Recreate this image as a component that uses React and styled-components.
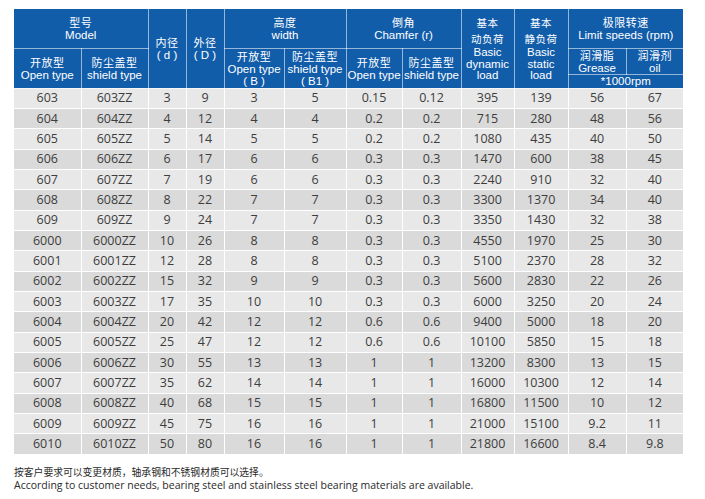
import React from "react";
import styled, { createGlobalStyle } from "styled-components";

const GlobalStyle = createGlobalStyle`
  html, body {
    margin: 0;
    padding: 0;
    background: #fff;
  }
`;

const Page = styled.div`
  padding: 9px 0 0 14px;
  width: 705px;
  box-sizing: border-box;
`;

const Table = styled.table`
  width: 669px;
  table-layout: fixed;
  border-collapse: collapse;
  border-style: hidden;
`;

const HeadCell = styled.th`
  background: #125daa;
  color: #fff;
  font-family: "Liberation Sans", "Noto Sans CJK SC", sans-serif;
  font-size: 11.5px;
  font-weight: normal;
  line-height: ${(p) => p.$lh || 12}px;
  text-align: center;
  vertical-align: middle;
  padding: 0;
  white-space: nowrap;
  border: 1px solid rgba(255, 255, 255, 0.55);
`;

const Zh = styled.span`
  font-family: "Noto Sans CJK SC", sans-serif;
  font-size: 11px;
  letter-spacing: 0.5px;
`;

// two stacked chinese lines for the tall load columns
const ZhBlock = styled.div`
  font-family: "Noto Sans CJK SC", sans-serif;
  font-size: 10.5px;
  letter-spacing: 0.5px;
  line-height: 15.5px;
  margin-bottom: 1px;
`;

const HeadRow = styled.tr`
  height: ${(p) => p.$h}px;
`;

const Row = styled.tr`
  height: 20.35px;
  background: ${(p) => (p.$alt ? "#dadada" : "#e8e8e8")};
`;

const Cell = styled.td`
  font-family: "Open Sans", sans-serif;
  font-size: 12.5px;
  color: #3d3d3d;
  text-align: center;
  vertical-align: middle;
  padding: 0;
  line-height: 14px;
  border: 1px solid #fff;
`;

const Note = styled.div`
  margin-top: 12px;
  color: #2a2a2a;
`;

const NoteZh = styled.div`
  font-family: "Noto Sans CJK SC", sans-serif;
  font-size: 9.8px;
  line-height: 12px;
`;

const NoteEn = styled.div`
  font-family: "Open Sans", sans-serif;
  font-size: 10.5px;
  line-height: 14px;
`;

const widths = [67, 67, 38, 38, 60, 62, 56, 59, 53, 54, 58, 57];

const rows = [
  ["603", "603ZZ", "3", "9", "3", "5", "0.15", "0.12", "395", "139", "56", "67"],
  ["604", "604ZZ", "4", "12", "4", "4", "0.2", "0.2", "715", "280", "48", "56"],
  ["605", "605ZZ", "5", "14", "5", "5", "0.2", "0.2", "1080", "435", "40", "50"],
  ["606", "606ZZ", "6", "17", "6", "6", "0.3", "0.3", "1470", "600", "38", "45"],
  ["607", "607ZZ", "7", "19", "6", "6", "0.3", "0.3", "2240", "910", "32", "40"],
  ["608", "608ZZ", "8", "22", "7", "7", "0.3", "0.3", "3300", "1370", "34", "40"],
  ["609", "609ZZ", "9", "24", "7", "7", "0.3", "0.3", "3350", "1430", "32", "38"],
  ["6000", "6000ZZ", "10", "26", "8", "8", "0.3", "0.3", "4550", "1970", "25", "30"],
  ["6001", "6001ZZ", "12", "28", "8", "8", "0.3", "0.3", "5100", "2370", "28", "32"],
  ["6002", "6002ZZ", "15", "32", "9", "9", "0.3", "0.3", "5600", "2830", "22", "26"],
  ["6003", "6003ZZ", "17", "35", "10", "10", "0.3", "0.3", "6000", "3250", "20", "24"],
  ["6004", "6004ZZ", "20", "42", "12", "12", "0.6", "0.6", "9400", "5000", "18", "20"],
  ["6005", "6005ZZ", "25", "47", "12", "12", "0.6", "0.6", "10100", "5850", "15", "18"],
  ["6006", "6006ZZ", "30", "55", "13", "13", "1", "1", "13200", "8300", "13", "15"],
  ["6007", "6007ZZ", "35", "62", "14", "14", "1", "1", "16000", "10300", "12", "14"],
  ["6008", "6008ZZ", "40", "68", "15", "15", "1", "1", "16800", "11500", "10", "12"],
  ["6009", "6009ZZ", "45", "75", "16", "16", "1", "1", "21000", "15100", "9.2", "11"],
  ["6010", "6010ZZ", "50", "80", "16", "16", "1", "1", "21800", "16600", "8.4", "9.8"],
];

const App = () => {
  return (
    <Page>
      <GlobalStyle />
      <Table>
        <colgroup>
          {widths.map((w, i) => (
            <col key={i} style={{ width: w }} />
          ))}
        </colgroup>
        <thead>
          <HeadRow $h={39}>
            <HeadCell colSpan={2}>
              <Zh>型号</Zh>
              <br />
              Model
            </HeadCell>
            <HeadCell rowSpan={3}>
              <Zh>内径</Zh>
              <br />( d )
            </HeadCell>
            <HeadCell rowSpan={3}>
              <Zh>外径</Zh>
              <br />( D )
            </HeadCell>
            <HeadCell colSpan={2}>
              <Zh>高度</Zh>
              <br />
              width
            </HeadCell>
            <HeadCell colSpan={2}>
              <Zh>倒角</Zh>
              <br />
              Chamfer (r)
            </HeadCell>
            <HeadCell rowSpan={3} $lh={11.5}>
              <ZhBlock>
                基本
                <br />
                动负荷
              </ZhBlock>
              Basic
              <br />
              dynamic
              <br />
              load
            </HeadCell>
            <HeadCell rowSpan={3} $lh={11.5}>
              <ZhBlock>
                基本
                <br />
                静负荷
              </ZhBlock>
              Basic
              <br />
              static
              <br />
              load
            </HeadCell>
            <HeadCell colSpan={2}>
              <Zh>极限转速</Zh>
              <br />
              Limit speeds (rpm)
            </HeadCell>
          </HeadRow>
          <HeadRow $h={25}>
            <HeadCell rowSpan={2}>
              <Zh>开放型</Zh>
              <br />
              Open type
            </HeadCell>
            <HeadCell rowSpan={2}>
              <Zh>防尘盖型</Zh>
              <br />
              shield type
            </HeadCell>
            <HeadCell rowSpan={2}>
              <Zh>开放型</Zh>
              <br />
              Open type
              <br />( B )
            </HeadCell>
            <HeadCell rowSpan={2}>
              <Zh>防尘盖型</Zh>
              <br />
              shield type
              <br />( B1 )
            </HeadCell>
            <HeadCell rowSpan={2}>
              <Zh>开放型</Zh>
              <br />
              Open type
            </HeadCell>
            <HeadCell rowSpan={2}>
              <Zh>防尘盖型</Zh>
              <br />
              shield type
            </HeadCell>
            <HeadCell>
              <Zh>润滑脂</Zh>
              <br />
              Grease
            </HeadCell>
            <HeadCell>
              <Zh>润滑剂</Zh>
              <br />
              oil
            </HeadCell>
          </HeadRow>
          <HeadRow $h={14}>
            <HeadCell colSpan={2}>*1000rpm</HeadCell>
          </HeadRow>
        </thead>
        <tbody>
          {rows.map((r, i) => (
            <Row key={r[0]} $alt={i % 2 === 1}>
              {r.map((v, j) => (
                <Cell key={j}>{v}</Cell>
              ))}
            </Row>
          ))}
        </tbody>
      </Table>
      <Note>
        <NoteZh>按客户要求可以变更材质，轴承钢和不锈钢材质可以选择。</NoteZh>
        <NoteEn>
          According to customer needs, bearing steel and stainless steel bearing
          materials are available.
        </NoteEn>
      </Note>
    </Page>
  );
};

export default App;
